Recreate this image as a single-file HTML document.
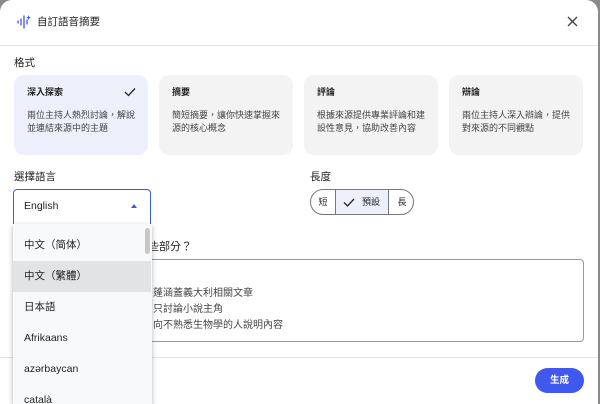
<!DOCTYPE html>
<html><head><meta charset="utf-8"><style>
*{box-sizing:border-box;margin:0;padding:0}
body{width:600px;height:404px;overflow:hidden;background:#8a8a8a;font-family:"Liberation Sans","Noto Sans CJK TC",sans-serif;color:#1f1f1f;position:relative}
.dlg{position:absolute;left:0;top:0;width:598px;height:404px;background:#fff;border-radius:12px 12px 0 0}
.abs{position:absolute;white-space:nowrap}
.t{font-size:10.5px}
.card{position:absolute;top:75px;width:134px;height:80px;border-radius:10px;background:#f3f3f3;padding:10px 13px}
.card b{display:block;font-size:9px;font-weight:bold;margin-bottom:10px;line-height:14px}
.card p{font-size:9px;line-height:13px;color:#444}
.item{position:absolute;left:0;width:138px;height:31px;font-size:10.5px;line-height:31px;padding-left:11px;color:#1f1f1f}
.ln{position:absolute;left:153px;font-size:10px;color:#444}
</style></head><body>
<div class="dlg">
<svg class="abs" style="left:16px;top:14px" width="16" height="16" viewBox="0 0 16 16"><g stroke="#3b5bd9" stroke-width="1.3" stroke-linecap="round"><line x1="2" y1="7" x2="2" y2="9"/><line x1="5" y1="5" x2="5" y2="11"/><line x1="8" y1="2" x2="8" y2="14"/><line x1="11" y1="6" x2="11" y2="10"/></g><path d="M12.5 1 L13.2 3 L15 3.6 L13.2 4.3 L12.5 6 L11.8 4.3 L10 3.6 L11.8 3Z" fill="#3b5bd9"/></svg>
<div class="abs" style="left:37px;top:14px;font-size:10.5px">自訂語音摘要</div>
<svg class="abs" style="left:567px;top:16px" width="11" height="11" viewBox="0 0 11 11"><path d="M1 1L10 10M10 1L1 10" stroke="#444" stroke-width="1.4"/></svg>
<div class="abs" style="left:0;top:45px;width:598px;height:1px;background:#e3e3e3"></div>
<div class="abs t" style="left:14px;top:55px">格式</div>
<div class="card" style="left:14px;background:#edf0fb"><b>深入探索</b><p>兩位主持人熱烈討論，解說<br>並連結來源中的主題</p>
<svg class="abs" style="right:12px;top:12px" width="12" height="10" viewBox="0 0 12 10"><path d="M1 5L4.5 8.5L11 1.5" stroke="#222" stroke-width="1.3" fill="none"/></svg></div>
<div class="card" style="left:159px"><b>摘要</b><p>簡短摘要，讓你快速掌握來<br>源的核心概念</p></div>
<div class="card" style="left:304px"><b>評論</b><p>根據來源提供專業評論和建<br>設性意見，協助改善內容</p></div>
<div class="card" style="left:449px"><b>辯論</b><p>兩位主持人深入辯論，提供<br>對來源的不同觀點</p></div>
<div class="abs t" style="left:14px;top:169px">選擇語言</div>
<div class="abs" style="left:13px;top:189px;width:138px;height:36px;border:1.5px solid #3b5bd9;border-radius:4px 4px 0 0"></div>
<div class="abs" style="left:24px;top:200px;font-size:10.5px">English</div>
<div class="abs" style="left:131px;top:204px;width:0;height:0;border-left:3.5px solid transparent;border-right:3.5px solid transparent;border-bottom:4px solid #3b5bd9"></div>
<div class="abs t" style="left:310px;top:169px">長度</div>
<div class="abs" style="left:310px;top:189px;width:104px;height:26px;border:1px solid #777;border-radius:13px;overflow:hidden;font-size:9px">
<div class="abs" style="left:0;top:0;width:24px;height:24px;line-height:24px;text-align:center">短</div>
<div class="abs" style="left:24px;top:0;width:54px;height:24px;background:#edf0fb;border-left:1px solid #777;border-right:1px solid #777;line-height:24px;padding-left:26px">預設</div>
<svg class="abs" style="left:32px;top:8px" width="12" height="9" viewBox="0 0 12 9"><path d="M1 4.5L4.5 8L11 1" stroke="#222" stroke-width="1.3" fill="none"/></svg>
<div class="abs" style="left:78px;top:0;width:26px;height:24px;line-height:24px;text-align:center">長</div>
</div>
<div class="abs" style="left:148px;top:238px;font-size:11px">些部分？</div>
<div class="abs" style="left:14px;top:259px;width:570px;height:83px;border:1px solid #999;border-radius:4px"></div>
<div class="ln" style="top:284px">蓬涵蓋義大利相關文章</div>
<div class="ln" style="top:300px">只討論小說主角</div>
<div class="ln" style="top:316px">向不熟悉生物學的人說明內容</div>
<div class="abs" style="left:0;top:357px;width:598px;height:1px;background:#e3e3e3"></div>
<div class="abs" style="left:535px;top:368px;width:49px;height:25px;border-radius:13px;background:#4158f0;color:#fff;font-size:9.5px;line-height:25px;text-align:center;font-weight:bold">生成</div>
<div class="abs" style="left:13px;top:224px;width:139px;height:180px;background:#f8f9fa;box-shadow:0 2px 5px rgba(0,0,0,.3);overflow:hidden">
<div class="item" style="top:6px">中文（简体）</div>
<div class="item" style="top:37px;background:#e2e3e5">中文（繁體）</div>
<div class="item" style="top:68px">日本語</div>
<div class="item" style="top:99px">Afrikaans</div>
<div class="item" style="top:130px">azərbaycan</div>
<div class="item" style="top:161px">català</div>
<div class="abs" style="left:132px;top:4px;width:5px;height:26px;background:#c8c8c8;border-radius:3px"></div>
</div>
</div>
</body></html>
